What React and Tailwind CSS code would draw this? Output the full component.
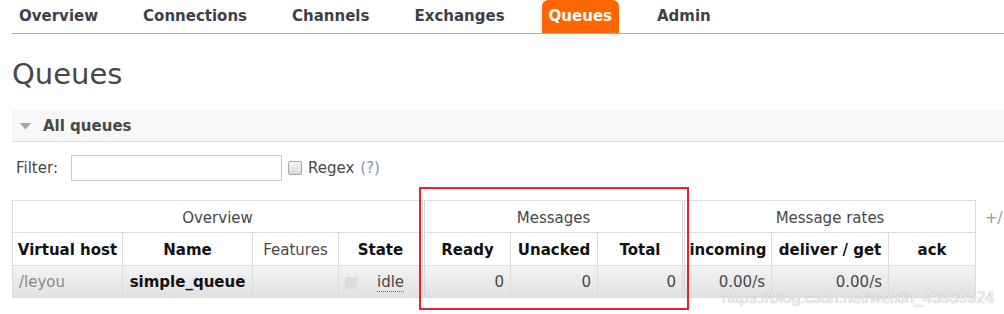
import React from 'react';

const tabs = ['Overview', 'Connections', 'Channels', 'Exchanges', 'Queues', 'Admin'];

const th1 = 'border border-[#dcdcdc] font-normal text-center pt-[3px]';
const th2 = 'border border-[#dcdcdc] font-bold text-[#111] text-center pt-[2px]';
const td = 'border border-[#dcdcdc] px-[6px] pt-[2px]';
// group separator: thin double line
const sep = ' [border-left:3px_double_#d6d6d6]';

function App() {
    return (
        <div className="relative w-[1004px] h-[314px] bg-white overflow-hidden font-['DejaVu_Sans',Verdana,sans-serif] text-[#484848]">
            {/* top nav */}
            <div className="ml-[12px] flex h-[34px] items-end gap-[31px] border-b border-[#f7a251]">
                {tabs.map(t => (
                    <div
                        key={t}
                        className={
                            t === 'Queues'
                                ? 'h-[33px] px-[7px] -ml-[1px] rounded-t-[6px] bg-[#ff6600] text-white text-[15px] font-bold leading-[33px]'
                                : 'h-[33px] px-[7px] text-[15px] font-bold leading-[33px] text-[#3f3f4a]'
                        }
                    >
                        {t}
                    </div>
                ))}
            </div>

            <h1 className="ml-[12px] mt-[23px] mb-[18px] text-[29px] leading-[35px] font-normal text-[#484848]">Queues</h1>

            {/* section header */}
            <div className="ml-[12px] h-[32px] pt-[2px] flex items-center bg-[#f7f7f7] border-b border-[#dedede]">
                <svg width="11" height="7" viewBox="0 0 11 7" className="ml-[8px]">
                    <polygon points="0,0 11,0 5.5,6.5" fill="#a3a3a3"/>
                </svg>
                <span className="ml-[12px] text-[15px] font-bold text-[#484848]">All queues</span>
            </div>

            {/* filter */}
            <div className="ml-[16px] mt-[13px] flex items-center h-[26px] text-[15px]">
                <span>Filter:</span>
                <input type="text" className="ml-[13px] w-[211px] h-[26px] border border-[#c9c9c9] bg-white outline-none"/>
                <span className="ml-[6px] w-[14px] h-[14px] rounded-[2px] border border-[#a8a8a8] bg-gradient-to-b from-[#f4f4f4] to-[#d8d8d8]"/>
                <span className="ml-[6px]">Regex</span>
                <span className="ml-[6px] text-[#7f95b6]">(?)</span>
            </div>

            {/* table */}
            <div className="ml-[12px] mt-[19px] flex items-start">
                <table className="table-fixed border-collapse w-[963px] shrink-0 text-[15px]">
                    <colgroup>
                        <col className="w-[110px]"/>
                        <col className="w-[130px]"/>
                        <col className="w-[86px]"/>
                        <col className="w-[85px]"/>
                        <col className="w-[87px]"/>
                        <col className="w-[87px]"/>
                        <col className="w-[86px]"/>
                        <col className="w-[88px]"/>
                        <col className="w-[117px]"/>
                        <col className="w-[87px]"/>
                    </colgroup>
                    <thead>
                        <tr className="h-[32px]">
                            <th colSpan={4} className={th1}>Overview</th>
                            <th colSpan={3} className={th1 + sep}>Messages</th>
                            <th colSpan={3} className={th1 + sep}>Message rates</th>
                        </tr>
                        <tr className="h-[33px]">
                            <th className={th2}>Virtual host</th>
                            <th className={th2}>Name</th>
                            <th className="border border-[#dcdcdc] font-normal text-center pt-[2px]">Features</th>
                            <th className={th2}>State</th>
                            <th className={th2 + sep}>Ready</th>
                            <th className={th2}>Unacked</th>
                            <th className={th2}>Total</th>
                            <th className={th2 + sep + ' whitespace-nowrap'}>incoming</th>
                            <th className={th2}>deliver / get</th>
                            <th className={th2}>ack</th>
                        </tr>
                    </thead>
                    <tbody>
                        <tr className="h-[32px] bg-gradient-to-b from-[#f3f3f3] to-[#e1e1e1]">
                            <td className={td + ' text-[#8a8a8a]'}>/leyou</td>
                            <td className={td + ' font-bold text-[#111] text-center'}>simple_queue</td>
                            <td className={td}></td>
                            <td className={td}>
                                <div className="flex items-center">
                                    <span className="w-[12px] h-[12px] bg-[#dcdcdc]"/>
                                    <span className="ml-[20px] border-b border-dotted border-[#666] leading-[17px]">idle</span>
                                </div>
                            </td>
                            <td className={td + sep + ' text-right'}>0</td>
                            <td className={td + ' text-right'}>0</td>
                            <td className={td + ' text-right'}>0</td>
                            <td className={td + sep + ' text-right'}>0.00/s</td>
                            <td className={td + ' text-right'}>0.00/s</td>
                            <td className={td}></td>
                        </tr>
                    </tbody>
                </table>
                <span className="ml-[9px] mt-[7px] text-[15px] text-[#9a9a9a] whitespace-nowrap">+/-</span>
            </div>

            {/* red highlight box */}
            <div className="absolute left-[419px] top-[187px] w-[270px] h-[123px] border-2 border-[#e8222c]"/>

            {/* watermark */}
            <div className="absolute left-[722px] top-[286px] text-[16px] font-['Liberation_Sans',Arial,sans-serif] text-[#f0f0f0] [text-shadow:0_0_1px_#9a9a9a] whitespace-nowrap">
                https://blog.csdn.net/weixin_43939924
            </div>
        </div>
    );
}

export default App;
